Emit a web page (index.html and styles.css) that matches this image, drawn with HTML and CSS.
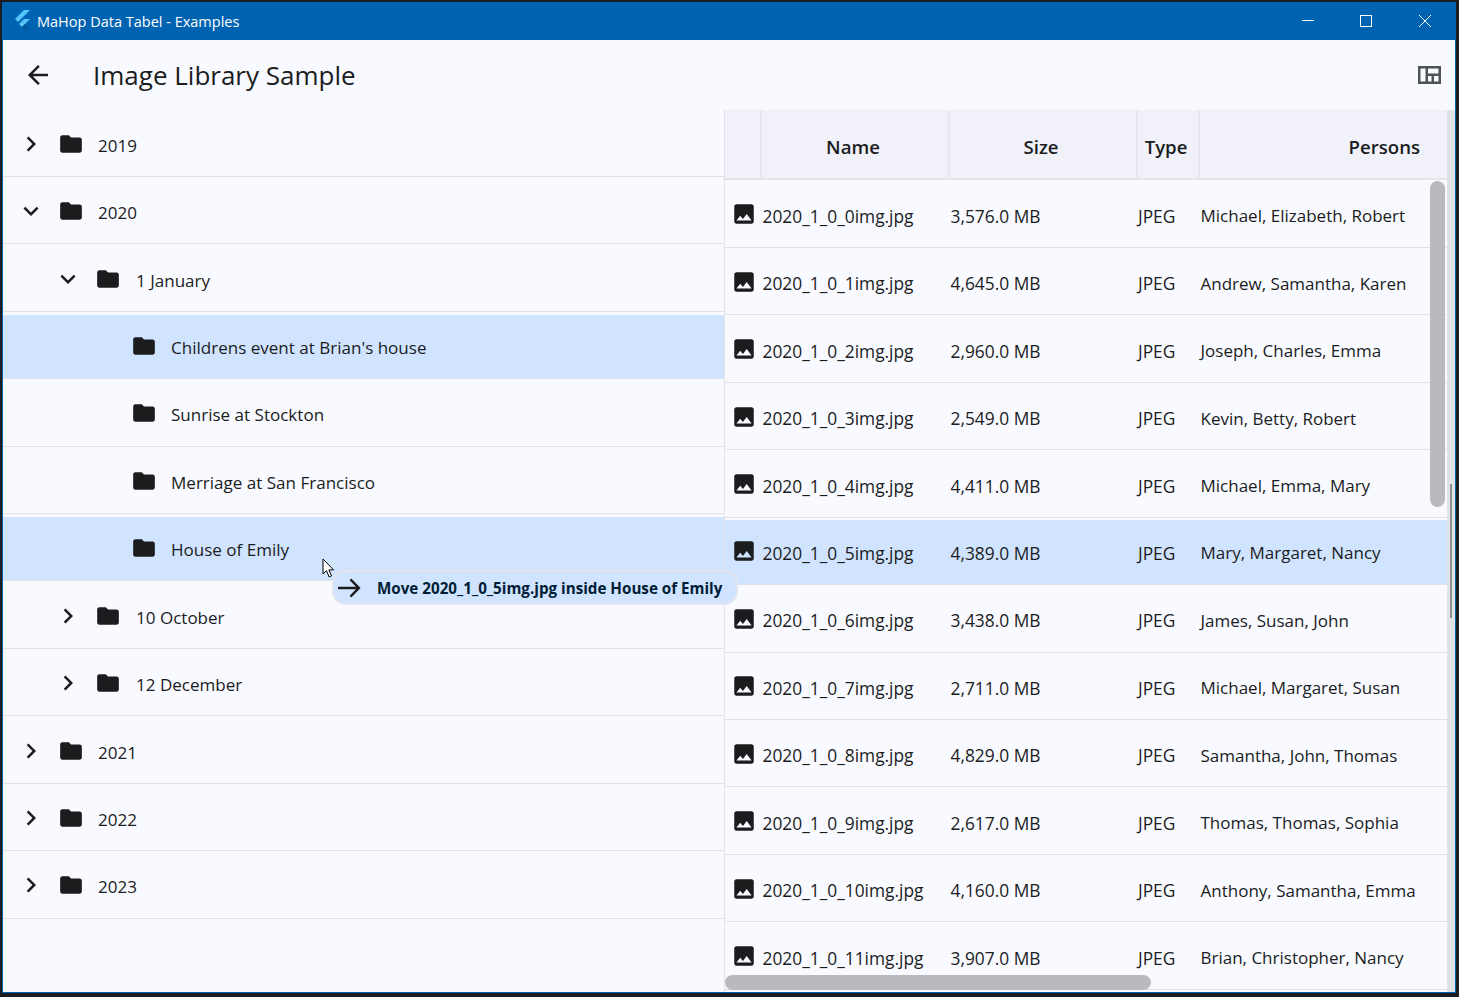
FILE: index.html
```html
<!DOCTYPE html>
<html>

<head>
	<title>MaHop Data Tabel - Examples</title>
	<link rel="stylesheet" href="styles.css">
</head>

<body>
	<svg class="defs" width="0" height="0">
		<symbol id="folder" viewBox="0 0 24 24"><path d="M10 4H4c-1.1 0-1.99.9-1.99 2L2 18c0 1.1.9 2 2 2h16c1.1 0 2-.9 2-2V8c0-1.1-.9-2-2-2h-8l-2-2z"/></symbol>
		<symbol id="image" viewBox="0 0 24 24"><path d="M21 19V5c0-1.1-.9-2-2-2H5c-1.1 0-2 .9-2 2v14c0 1.1.9 2 2 2h14c1.1 0 2-.9 2-2zM8.5 13.5l2.5 3.01L14.5 12l4.5 6H5l3.5-4.5z"/></symbol>
		<symbol id="right" viewBox="0 0 24 24"><path d="M10 6L8.59 7.41 13.17 12l-4.58 4.59L10 18l6-6z"/></symbol>
		<symbol id="down" viewBox="0 0 24 24"><path d="M16.59 8.59L12 13.17 7.41 8.59 6 10l6 6 6-6z"/></symbol>
	</svg>

	<div class="window">
		<div class="titlebar">
			<svg class="logo" viewBox="0 0 18 20">
				<path fill="#54c5f8" d="M11 0h6L5 12 2 9z"/>
				<path fill="#54c5f8" d="M17 9h-6l-5 5 3 3z"/>
				<path fill="#01579b" d="M9 17l2 2h6l-5-5z"/>
			</svg>
			<span class="title-text">MaHop Data Tabel - Examples</span>
			<div class="win-buttons">
				<svg viewBox="0 0 14 14"><path d="M2 6.5h12" stroke="#fff" fill="none"/></svg>
				<svg viewBox="0 0 14 14"><rect x="1.5" y="1.5" width="11" height="11" stroke="#fff" fill="none"/></svg>
				<svg viewBox="0 0 14 14"><path d="M1 1l12 12M13 1L1 13" stroke="#fff" fill="none"/></svg>
			</div>
		</div>

		<div class="toolbar">
			<svg class="back" viewBox="0 0 24 24"><path d="M20 11H7.83l5.59-5.59L12 4l-8 8 8 8 1.41-1.41L7.83 13H20v-2z"/></svg>
			<h1>Image Library Sample</h1>
			<svg class="layout-icon" viewBox="0 0 23 18">
				<path fill-rule="evenodd" d="M0 0h23v18H0zM2.5 2.5v13h5v-13zM10 2.5v5h10.5v-5zM10 10v5.500h3.500V10zM16 10v5.500h4.500V10z"/>
			</svg>
		</div>

		<div class="main">
			<div class="tree">
				<div class="tree-row depth-0"><svg class="chev"><use href="#right"/></svg><svg class="folder"><use href="#folder"/></svg><span>2019</span></div>
				<div class="tree-row depth-0"><svg class="chev"><use href="#down"/></svg><svg class="folder"><use href="#folder"/></svg><span>2020</span></div>
				<div class="tree-row depth-1"><svg class="chev"><use href="#down"/></svg><svg class="folder"><use href="#folder"/></svg><span>1 January</span></div>
				<div class="tree-row depth-2 selected"><svg class="folder"><use href="#folder"/></svg><span>Childrens event at Brian's house</span></div>
				<div class="tree-row depth-2"><svg class="folder"><use href="#folder"/></svg><span>Sunrise at Stockton</span></div>
				<div class="tree-row depth-2"><svg class="folder"><use href="#folder"/></svg><span>Merriage at San Francisco</span></div>
				<div class="tree-row depth-2 selected"><svg class="folder"><use href="#folder"/></svg><span>House of Emily</span></div>
				<div class="tree-row depth-1"><svg class="chev"><use href="#right"/></svg><svg class="folder"><use href="#folder"/></svg><span>10 October</span></div>
				<div class="tree-row depth-1"><svg class="chev"><use href="#right"/></svg><svg class="folder"><use href="#folder"/></svg><span>12 December</span></div>
				<div class="tree-row depth-0"><svg class="chev"><use href="#right"/></svg><svg class="folder"><use href="#folder"/></svg><span>2021</span></div>
				<div class="tree-row depth-0"><svg class="chev"><use href="#right"/></svg><svg class="folder"><use href="#folder"/></svg><span>2022</span></div>
				<div class="tree-row depth-0"><svg class="chev"><use href="#right"/></svg><svg class="folder"><use href="#folder"/></svg><span>2023</span></div>
			</div>

			<div class="table">
				<div class="table-head">
					<div class="head-cell"></div>
					<div class="head-cell">Name</div>
					<div class="head-cell">Size</div>
					<div class="head-cell">Type</div>
					<div class="head-cell persons">Persons</div>
				</div>
				<div class="table-row"><svg class="thumb"><use href="#image"/></svg><span>2020_1_0_0img.jpg</span><span>3,576.0 MB</span><span>JPEG</span><span>Michael, Elizabeth, Robert</span></div>
				<div class="table-row"><svg class="thumb"><use href="#image"/></svg><span>2020_1_0_1img.jpg</span><span>4,645.0 MB</span><span>JPEG</span><span>Andrew, Samantha, Karen</span></div>
				<div class="table-row"><svg class="thumb"><use href="#image"/></svg><span>2020_1_0_2img.jpg</span><span>2,960.0 MB</span><span>JPEG</span><span>Joseph, Charles, Emma</span></div>
				<div class="table-row"><svg class="thumb"><use href="#image"/></svg><span>2020_1_0_3img.jpg</span><span>2,549.0 MB</span><span>JPEG</span><span>Kevin, Betty, Robert</span></div>
				<div class="table-row"><svg class="thumb"><use href="#image"/></svg><span>2020_1_0_4img.jpg</span><span>4,411.0 MB</span><span>JPEG</span><span>Michael, Emma, Mary</span></div>
				<div class="table-row selected"><svg class="thumb"><use href="#image"/></svg><span>2020_1_0_5img.jpg</span><span>4,389.0 MB</span><span>JPEG</span><span>Mary, Margaret, Nancy</span></div>
				<div class="table-row"><svg class="thumb"><use href="#image"/></svg><span>2020_1_0_6img.jpg</span><span>3,438.0 MB</span><span>JPEG</span><span>James, Susan, John</span></div>
				<div class="table-row"><svg class="thumb"><use href="#image"/></svg><span>2020_1_0_7img.jpg</span><span>2,711.0 MB</span><span>JPEG</span><span>Michael, Margaret, Susan</span></div>
				<div class="table-row"><svg class="thumb"><use href="#image"/></svg><span>2020_1_0_8img.jpg</span><span>4,829.0 MB</span><span>JPEG</span><span>Samantha, John, Thomas</span></div>
				<div class="table-row"><svg class="thumb"><use href="#image"/></svg><span>2020_1_0_9img.jpg</span><span>2,617.0 MB</span><span>JPEG</span><span>Thomas, Thomas, Sophia</span></div>
				<div class="table-row"><svg class="thumb"><use href="#image"/></svg><span>2020_1_0_10img.jpg</span><span>4,160.0 MB</span><span>JPEG</span><span>Anthony, Samantha, Emma</span></div>
				<div class="table-row"><svg class="thumb"><use href="#image"/></svg><span>2020_1_0_11img.jpg</span><span>3,907.0 MB</span><span>JPEG</span><span>Brian, Christopher, Nancy</span></div>
				<div class="vscroll"></div>
				<div class="hscroll"></div>
			</div>

			<div class="track"><div class="track-thumb"></div></div>

			<svg class="cursor" viewBox="0 0 13 20"><path d="M1 1v15l3.500-3.300 2.600 6.200 2.400-1-2.600-6h4.600z" fill="#fff" stroke="#000" stroke-width="1"/></svg>
			<div class="drag-tip">
				<svg viewBox="0 0 24 24"><path d="M1 10.800h18l-6.400-6.500L14.300 2.600 23.600 12l-9.300 9.400-1.700-1.700 6.400-6.500H1z"/></svg>
				<span>Move 2020_1_0_5img.jpg inside House of Emily</span>
			</div>
		</div>
	</div>
</body>

</html>
```
FILE: styles.css
```css
html, body {
	height: 100%;
	margin: 0;
	overflow: hidden;
}

body {
	background: #1b1d20;
	padding: 2px 3px 4px 2px;
	box-sizing: border-box;
	font-family: "Open Sans", sans-serif;
	color: #1a1c1e;
}

.defs {
	position: absolute;
}

.window {
	height: 100%;
	box-sizing: border-box;
	border: 1px solid #0063b1;
	background: #f9faff;
	display: flex;
	flex-direction: column;
}

.titlebar {
	height: 37px;
	flex: none;
	background: #0063b1;
	color: white;
	display: flex;
	align-items: center;
	font-size: 14.5px;
}

.logo {
	width: 18px;
	height: 20px;
	margin-left: 10px;
	margin-top: -3px;
}

.title-text {
	margin-left: 6px;
}

.win-buttons {
	margin-left: auto;
	display: flex;
	gap: 45px;
	margin-right: 23px;
	margin-top: -1px;
}

.win-buttons svg {
	width: 14px;
	height: 14px;
	overflow: visible;
}

.toolbar {
	height: 70px;
	flex: none;
	display: flex;
	align-items: center;
}

.back {
	width: 30px;
	height: 30px;
	margin-left: 20px;
	margin-top: -1px;
	fill: #1a1c1e;
}

.toolbar h1 {
	margin: 0 0 0 40px;
	font-size: 26px;
	font-weight: 400;
}

.layout-icon {
	width: 23px;
	height: 18px;
	margin-left: auto;
	margin-right: 14px;
	fill: #4f5256;
}

.main {
	flex: 1;
	display: flex;
	min-height: 0;
	position: relative;
}

.tree {
	width: 722px;
	flex: none;
	box-sizing: border-box;
	border-right: 1px solid #e4e4ea;
	margin-top: -0.6px;
	overflow: hidden;
}

.tree-row {
	height: 67.45px;
	box-sizing: border-box;
	border-bottom: 1px solid #e2e2e6;
	padding-top: 2px;
	display: flex;
	align-items: center;
	font-size: 17.05px;
}

.tree-row span {
	padding-top: 3px;
}

.selected {
	background: linear-gradient(transparent 3px, #d1e4ff 3px);
}

.depth-0 {
	padding-left: 13px;
}

.depth-1 {
	padding-left: 50px;
}

.depth-1 span {
	margin-left: 1px;
}

.depth-2 {
	padding-left: 128px;
}

.chev {
	width: 30px;
	height: 30px;
	flex: none;
	fill: #1a1c1e;
	margin-right: 12px;
}

.folder {
	width: 26px;
	height: 26px;
	flex: none;
	fill: #1a1c1e;
	margin-right: 14px;
}

.table {
	width: 722px;
	flex: none;
	position: relative;
	overflow: hidden;
}

.table-head {
	height: 70px;
	margin-bottom: 0.55px;
	box-sizing: border-box;
	background: #f1f2f9;
	border-bottom: 2px solid #e4e4ea;
	display: grid;
	grid-template-columns: 37px 188px 188px 62px 1fr;
	font-size: 18.6px;
	font-weight: 600;
}

.head-cell {
	display: flex;
	align-items: center;
	justify-content: center;
	border-right: 2px solid #e6e7ee;
	padding-top: 4px;
	padding-right: 4px;
}

.head-cell.persons {
	justify-content: flex-end;
	border-right: 0;
	padding-right: 27px;
}

.table-row {
	height: 67.45px;
	box-sizing: border-box;
	border-bottom: 1px solid #e2e2e6;
	padding-top: 1px;
	display: grid;
	grid-template-columns: 37px 188px 187.5px 62.5px 1fr;
	align-items: center;
	font-size: 17.35px;
	white-space: nowrap;
}

.table-row span {
	padding-top: 3px;
	padding-left: 0.5px;
}

.table-row span:last-child {
	font-size: 17px;
}

.table-row.selected {
	background: linear-gradient(transparent 2px, #d1e4ff 2px);
}

.thumb {
	width: 26px;
	height: 26px;
	margin-left: 6px;
	fill: #1a1c1e;
}

.vscroll {
	position: absolute;
	left: 705px;
	top: 71px;
	width: 15px;
	height: 326px;
	background: #b9babd;
	border-radius: 8px;
}

.hscroll {
	position: absolute;
	left: 0;
	top: 865px;
	width: 426px;
	height: 15px;
	background: #b9babd;
	border-radius: 8px;
}

.track {
	flex: 1;
	background: #e1e2e7;
	position: relative;
}

.track-thumb {
	position: absolute;
	left: 3px;
	top: 374px;
	width: 2px;
	height: 134px;
	background: #8f9095;
}

.cursor {
	position: absolute;
	left: 319px;
	top: 448px;
	width: 13px;
	height: 20px;
}

.drag-tip {
	position: absolute;
	left: 329px;
	top: 460px;
	width: 406px;
	height: 35px;
	box-sizing: border-box;
	border: 2px solid #e2e5f0;
	border-radius: 14px;
	background: #d1e4ff;
	display: flex;
	align-items: center;
	color: #001d36;
	font-size: 15.2px;
	font-weight: 700;
	white-space: nowrap;
}

.drag-tip svg {
	width: 24px;
	height: 24px;
	margin-left: 3px;
	margin-right: 16px;
	fill: #1a1c1e;
}
```
